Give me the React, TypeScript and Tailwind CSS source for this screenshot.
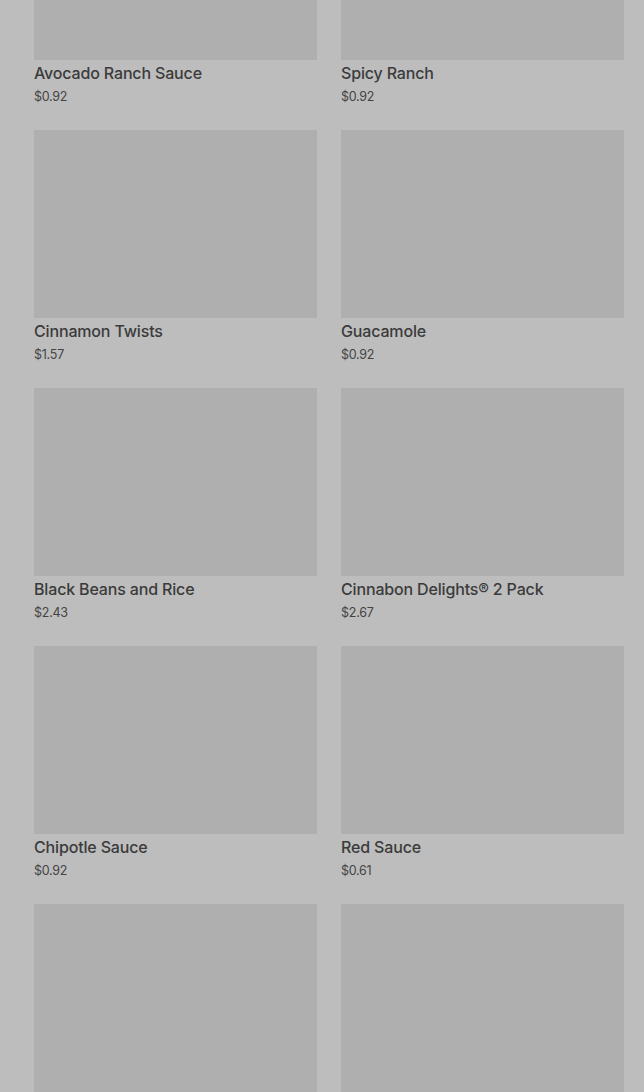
import React from "react";

const items = [
  { name: "Avocado Ranch Sauce", price: "$0.92" },
  { name: "Spicy Ranch", price: "$0.92" },
  { name: "Cinnamon Twists", price: "$1.57" },
  { name: "Guacamole", price: "$0.92" },
  { name: "Black Beans and Rice", price: "$2.43" },
  { name: "Cinnabon Delights® 2 Pack", price: "$2.67" },
  { name: "Chipotle Sauce", price: "$0.92" },
  { name: "Red Sauce", price: "$0.61" },
  { name: "", price: "" },
  { name: "", price: "" },
];

export default function App() {
  return (
    <div
      className="w-[644px] h-[1092px] overflow-hidden bg-[#bdbdbd]"
      style={{ fontFamily: "Inter, 'Noto Sans', sans-serif" }}
    >
      <div className="grid grid-cols-2 gap-x-6 gap-y-[23px] pl-[34px] pr-5 -mt-[128px]">
        {items.map((it, i) => (
          <div key={i} className="flex flex-col">
            <div className="h-[188px] bg-[#afafaf]" />
            {it.name && (
              <>
                <div className="mt-px text-base leading-6 font-medium tracking-[-0.01em] text-[#3b3b3b]">
                  {it.name}
                </div>
                <div className="mt-[2px] text-[12.5px] leading-5 tracking-[-0.02em] text-[#444]">
                  {it.price}
                </div>
              </>
            )}
          </div>
        ))}
      </div>
    </div>
  );
}
